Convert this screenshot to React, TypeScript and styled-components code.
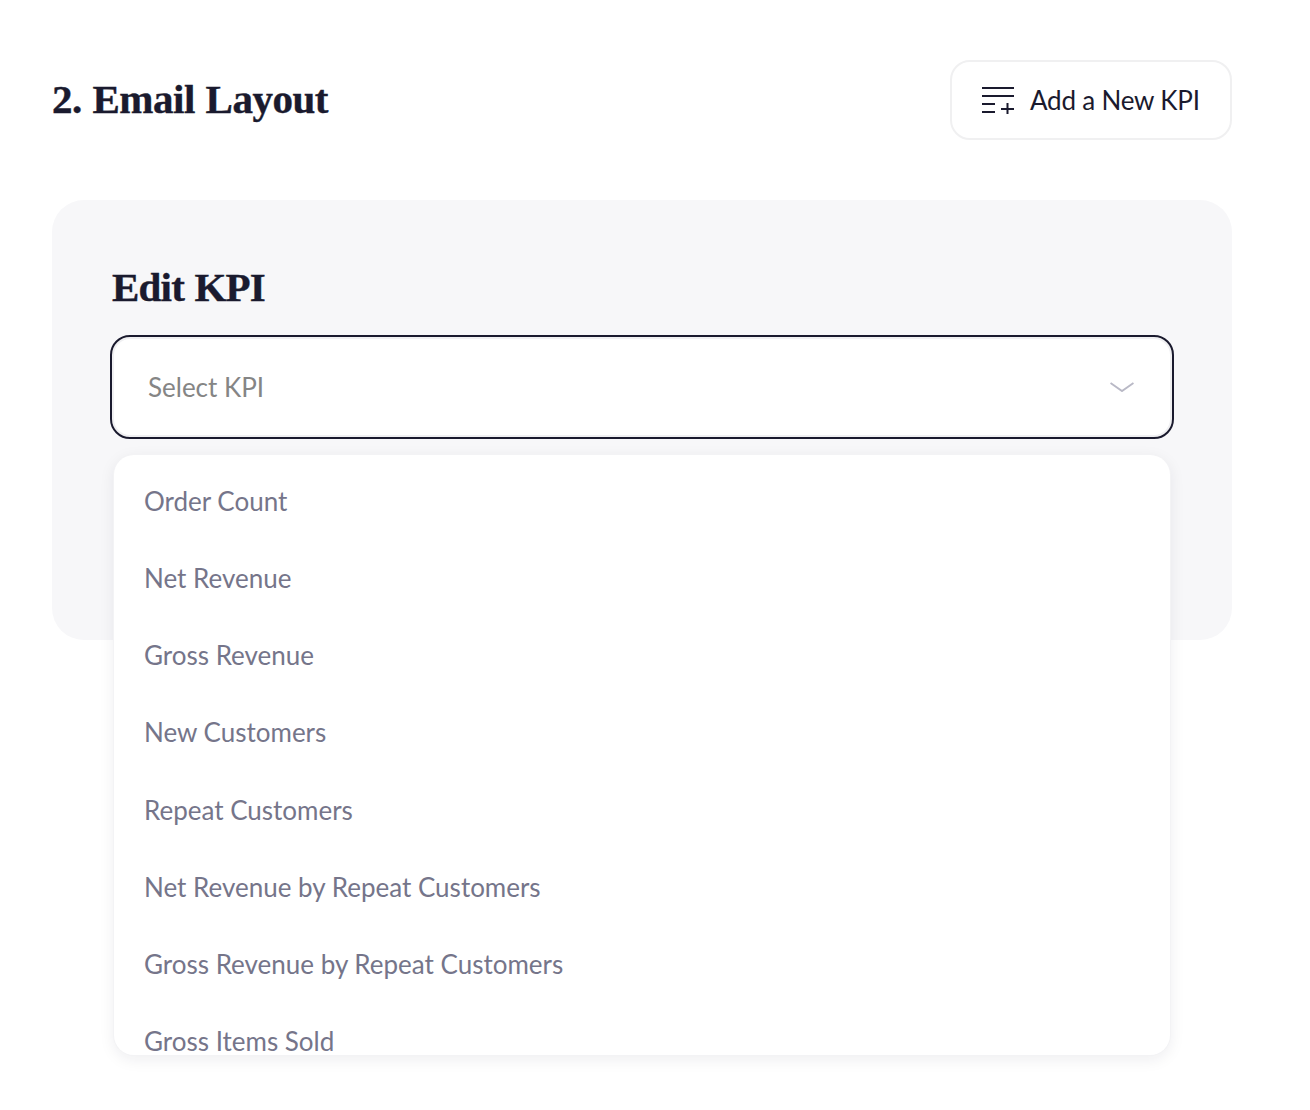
import React from "react";
import styled, { createGlobalStyle } from "styled-components";

const KPI_OPTIONS = [
  "Order Count",
  "Net Revenue",
  "Gross Revenue",
  "New Customers",
  "Repeat Customers",
  "Net Revenue by Repeat Customers",
  "Gross Revenue by Repeat Customers",
  "Gross Items Sold",
];

function App(): JSX.Element {
  return (
    <React.Fragment>
      <GlobalStyle />
      <Page>
        <Header>
          <PageTitle>2. Email Layout</PageTitle>
          <AddButton>
            <AddIcon viewBox="0 0 32 27" fill="none" stroke="#1a1a2e" strokeWidth="2">
              <path d="M0 1h32M0 9h32M0 17h13M0 25h13M19 22h13M25.500 16v11" />
            </AddIcon>
            Add a New KPI
          </AddButton>
        </Header>

        <Card>
          <CardTitle>Edit KPI</CardTitle>
          <SelectWrap>
            <SelectBox>
              <Placeholder>Select KPI</Placeholder>
              <svg width="24" height="10" viewBox="0 0 24 10" fill="none" stroke="#b9b9c6" strokeWidth="2">
                <path d="M0.500 1l11.500 8 11.500-8" />
              </svg>
            </SelectBox>
            <Menu>
              {KPI_OPTIONS.map((option) => (
                <MenuItem key={option}>{option}</MenuItem>
              ))}
            </Menu>
          </SelectWrap>
        </Card>
      </Page>
    </React.Fragment>
  );
}

export default App;

const GlobalStyle = createGlobalStyle`
  html, body {
    margin: 0;
    padding: 0;
    background-color: white;
  }
  * {
    box-sizing: border-box;
  }
`;

const Page = styled.div`
  width: 1310px;
  height: 1110px;
  padding: 60px 78px 0 52px;
  overflow: hidden;
  font-family: Lato, "Liberation Sans", sans-serif;
  color: #1a1a2e;
`;

const Header = styled.div`
  display: flex;
  align-items: center;
  justify-content: space-between;
  height: 80px;
`;

const PageTitle = styled.h1`
  margin: 0 0 2px;
  font-family: "Liberation Serif", serif;
  font-size: 41px;
  font-weight: 700;
  line-height: 1;
  letter-spacing: -0.5px;
  word-spacing: 1px;
  -webkit-text-stroke: 0.4px #1a1a2e;
  color: #1a1a2e;
`;

const AddButton = styled.button`
  display: flex;
  align-items: center;
  gap: 16px;
  width: 282px;
  height: 80px;
  padding: 0 30px;
  background-color: white;
  border: 2px solid #f0f0f1;
  border-radius: 20px;
  font-family: inherit;
  font-size: 26px;
  letter-spacing: -0.2px;
  color: #1a1a2e;
  white-space: nowrap;
`;

const AddIcon = styled.svg`
  flex-shrink: 0;
  width: 32px;
  height: 27px;
`;

const Card = styled.section`
  margin-top: 60px;
  height: 440px;
  padding: 60px 58px;
  background-color: #f7f7f9;
  border-radius: 32px;
`;

const CardTitle = styled.h2`
  margin: 0 0 0 2px;
  font-family: "Liberation Serif", serif;
  font-size: 41px;
  font-weight: 700;
  line-height: 54px;
  letter-spacing: -0.8px;
  word-spacing: 1px;
  -webkit-text-stroke: 0.4px #1a1a2e;
  color: #1a1a2e;
`;

const SelectWrap = styled.div`
  position: relative;
  margin-top: 21px;
`;

const SelectBox = styled.div`
  display: flex;
  align-items: center;
  justify-content: space-between;
  height: 104px;
  padding: 0 38px 0 36px;
  background-color: white;
  border: 2px solid #1a1a2e;
  border-radius: 20px;
  box-shadow: inset 0 0 0 2px #f0f0f2;
`;

const Placeholder = styled.span`
  font-size: 26px;
  color: #858585;
`;

const Menu = styled.ul`
  position: absolute;
  top: 120px;
  left: 4px;
  right: 4px;
  height: 600px;
  margin: 0;
  padding: 8px 0 0 30px;
  overflow: hidden;
  list-style: none;
  background-color: white;
  border-radius: 20px;
  box-shadow: 0 0 0 1px #f3f3f5, 0 4px 16px rgba(26, 26, 46, 0.08);
`;

const MenuItem = styled.li`
  height: 77.14px;
  line-height: 77.14px;
  font-size: 26px;
  color: #75758a;
`;
